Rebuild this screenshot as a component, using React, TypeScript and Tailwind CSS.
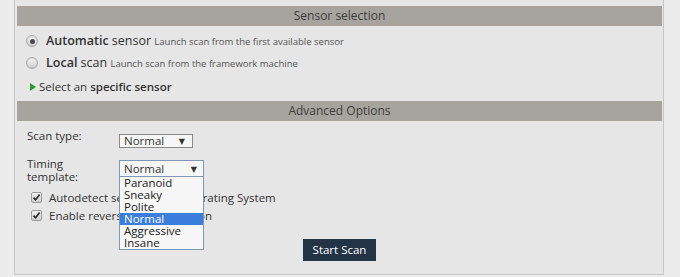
import React from "react";

const FONT = { fontFamily: '"Open Sans", "DejaVu Sans", sans-serif' };

type SectionBarProps = { title: string };

const SectionBar: React.FC<SectionBarProps> = ({ title }) => (
  <div className="ml-[2px] mr-[1px] h-[20px] bg-[#a7a49f] flex items-center justify-center text-[12px] text-[#3d3d3d]">
    {title}
  </div>
);

const Radio = ({ checked }: { checked?: boolean }) => (
  <span className="w-[12px] h-[12px] rounded-full border border-[#a9a9a9] bg-gradient-to-b from-[#fdfdfd] to-[#c9c9c9] flex items-center justify-center shadow-[inset_0_1px_1px_rgba(0,0,0,0.15)]">
    {checked && <span className="w-[5px] h-[5px] rounded-full bg-[#4a4a4a]" />}
  </span>
);

const Checkbox = () => (
  <span className="w-[11px] h-[11px] rounded-[2px] border border-[#9c9c9c] bg-gradient-to-b from-[#f4f4f4] to-[#cfcfcf] flex items-center justify-center">
    <svg width="9" height="9" viewBox="0 0 9 9">
      <path d="M1.5 4.6 L3.6 6.8 L7.6 1.6" fill="none" stroke="#2b2b2b" strokeWidth="1.7" />
    </svg>
  </span>
);

const timingOptions = ["Paranoid", "Sneaky", "Polite", "Normal", "Aggressive", "Insane"];

export default function App() {
  return (
    <div className="w-[680px] h-[277px] bg-[#ececec] pl-[14px] overflow-hidden" style={FONT}>
      <div className="w-[650px] h-[275px] bg-[#e6e6e6] border-l border-r border-b border-[#c6c6c6] pt-[6px] relative">
        <SectionBar title="Sensor selection" />

        <div className="pl-[11px] text-[#333]">
          <div className="h-[22px] mt-[4px] flex items-center gap-[8px]">
            <Radio checked />
            <span className="text-[12.5px]">
              <b className="font-semibold">Automatic</b> sensor{" "}
              <span className="text-[9.5px] text-[#555]">Launch scan from the first available sensor</span>
            </span>
          </div>
          <div className="h-[22px] flex items-center gap-[8px]">
            <Radio />
            <span className="text-[12.5px]">
              <b className="font-semibold">Local</b> scan{" "}
              <span className="text-[9.5px] text-[#555]">Launch scan from the framework machine</span>
            </span>
          </div>
          <div className="h-[24px] pt-[2px] pl-[4px] flex items-center gap-[3px] text-[11.5px]">
            <svg width="6" height="8" viewBox="0 0 6 8">
              <path d="M0 0 L6 4 L0 8 Z" fill="#2e9a2e" />
            </svg>
            <span>
              Select an <b className="font-semibold">specific sensor</b>
            </span>
          </div>
        </div>

        <div className="mt-[3px]">
          <SectionBar title="Advanced Options" />
        </div>

        <div className="pl-[12px] text-[11.5px] text-[#333]">
          <div className="mt-[7px] h-[20px] flex items-start">
            <span className="w-[92px] leading-[14px] pt-[1px]">Scan type:</span>
            <span className="mt-[6px] w-[74px] h-[14px] border border-[#8a8a8a] bg-[#f7f7f7] flex items-center justify-between pl-[4px] pr-[7px] text-[11.5px] leading-none">
              Normal <span className="text-[8px]">▼</span>
            </span>
          </div>
          <div className="mt-[12px] h-[28px] flex items-start relative">
            <span className="w-[92px] leading-[13px] -mt-[3px]">
              Timing
              <br />
              template:
            </span>
            <span className="w-[85px] h-[17px] border border-[#7e97b8] bg-[#f7f7f7] flex items-center justify-between pl-[4px] pr-[6px] text-[11.5px] leading-none">
              Normal <span className="text-[8px]">▼</span>
            </span>
            <div className="absolute left-[92px] top-[17px] w-[85px] border border-[#7e97b8] border-t-0 bg-[#f7f7f7] z-10">
              {timingOptions.map((o) => (
                <div
                  key={o}
                  className={
                    "h-[12px] pl-[4px] text-[11.5px] leading-[12px] " +
                    (o === "Normal" ? "bg-[#3b7ddc] text-white" : "text-[#222]")
                  }
                >
                  {o}
                </div>
              ))}
            </div>
          </div>
          <div className="pl-[4px] h-[18px] flex items-center gap-[7px]">
            <Checkbox />
            <span className="pt-[2px]">Autodetect services and Operating System</span>
          </div>
          <div className="pl-[4px] h-[18px] flex items-center gap-[7px]">
            <Checkbox />
            <span className="pt-[2px]">Enable reverse DNS resolution</span>
          </div>
        </div>

        <div className="mt-[15px] flex pl-[288px]">
          <button className="w-[73px] h-[22px] bg-[#233447] text-white text-[11.5px]">Start Scan</button>
        </div>
      </div>
    </div>
  );
}
